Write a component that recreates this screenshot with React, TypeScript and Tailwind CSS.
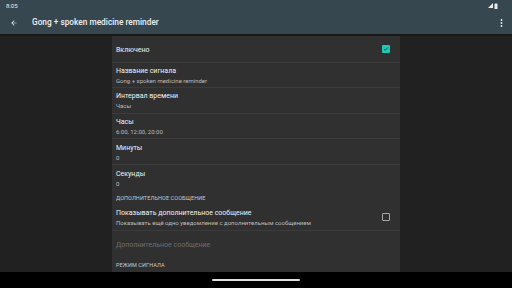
import React from "react";

const font = { fontFamily: "Roboto, 'Noto Sans', sans-serif" };

function Row({ title, sub, right, disabled, last }: { title: string; sub?: string; right?: React.ReactNode; disabled?: boolean; last?: boolean }) {
  return (
    <div className={`flex h-[26px] items-center pl-[4px] pr-[10px] ${last ? "" : "border-b border-[#3b3b3b]"}`}>
      <div className="flex flex-1 flex-col justify-center pt-[2px] leading-none">
        <div className={`text-[7px] leading-[9px] ${disabled ? "text-[#6e6e6e]" : "text-[#f2f2f2]"}`}>{title}</div>
        {sub && <div className="text-[6px] leading-[9px] text-[#bdbdbd]">{sub}</div>}
      </div>
      {right}
    </div>
  );
}

function Header({ text, className = "" }: { text: string; className?: string }) {
  return (
    <div className={`flex items-center pl-[4px] text-[5.5px] uppercase tracking-[0.1px] text-[#c8c8c8] ${className}`}>{text}</div>
  );
}

export default function App() {
  return (
    <div className="flex h-[288px] w-[512px] flex-col overflow-hidden bg-[#212121]" style={font}>
      <div className="flex h-[11px] items-center justify-between bg-[#37474f] pl-[6px] pr-[14px]">
        <span className="text-[6px] leading-none text-[#e8eaeb]">8:05</span>
        <div className="flex items-center gap-[1px]">
          <svg width="5" height="5" viewBox="0 0 5 5"><path d="M5 0 L5 5 L0 5 Z" fill="#e8eaeb" /></svg>
          <svg width="4" height="6" viewBox="0 0 4 6"><rect x="0.5" y="0.5" width="3" height="5.5" rx="0.5" fill="#e8eaeb" /></svg>
        </div>
      </div>
      <div className="flex h-[23px] items-center bg-[#37474f] pl-[10px] pr-[9px]">
        <svg width="8" height="8" viewBox="0 0 24 24" className="mr-[14px]">
          <path d="M20 11H7.83l5.59-5.59L12 4l-8 8 8 8 1.41-1.41L7.83 13H20v-2z" fill="#eceff1" />
        </svg>
        <span className="flex-1 text-[8.3px] font-medium text-[#eceff1]">Gong + spoken medicine reminder</span>
        <svg width="3" height="8" viewBox="0 0 3 8">
          <circle cx="1.5" cy="1" r="0.9" fill="#eceff1" />
          <circle cx="1.5" cy="4" r="0.9" fill="#eceff1" />
          <circle cx="1.5" cy="7" r="0.9" fill="#eceff1" />
        </svg>
      </div>
      <div className="relative flex flex-1 justify-center overflow-hidden">
        <div className="absolute left-0 right-0 top-0 h-[2px] bg-[#171717]" />
        <div className="flex w-[288px] flex-col bg-[#303030] pt-[3px]">
          <Row
            title="Включено"
            right={
              <div className="flex h-[8px] w-[8px] items-center justify-center rounded-[1px] bg-[#1ec8b4]">
                <svg width="6" height="6" viewBox="0 0 24 24"><path d="M4 12l5 5L20 6" stroke="#1e3a36" strokeWidth="3.5" fill="none" /></svg>
              </div>
            }
          />
          <Row title="Название сигнала" sub="Gong + spoken medicine reminder" />
          <Row title="Интервал времени" sub="Часы" />
          <Row title="Часы" sub="6:00, 12:00, 20:00" />
          <Row title="Минуты" sub="0" />
          <Row title="Секунды" sub="0" last />
          <Header text="Дополнительное сообщение" className="h-[15px] pt-[1px]" />
          <Row
            title="Показывать дополнительное сообщение"
            sub="Показывать ещё одно уведомление с дополнительным сообщением"
            right={<div className="h-[8px] w-[8px] rounded-[1px] border border-[#a8a8a8]" />}
          />
          <div className="flex h-[28px] items-center pl-[4px] pt-[1px]">
            <div className="text-[7px] text-[#6e6e6e]">Дополнительное сообщение</div>
          </div>
          <Header text="Режим сигнала" className="h-[14px]" />
        </div>
      </div>
      <div className="flex h-[16px] items-center justify-center bg-black">
        <div className="h-[2px] w-[88px] rounded-full bg-[#e0e0e0]" />
      </div>
    </div>
  );
}
